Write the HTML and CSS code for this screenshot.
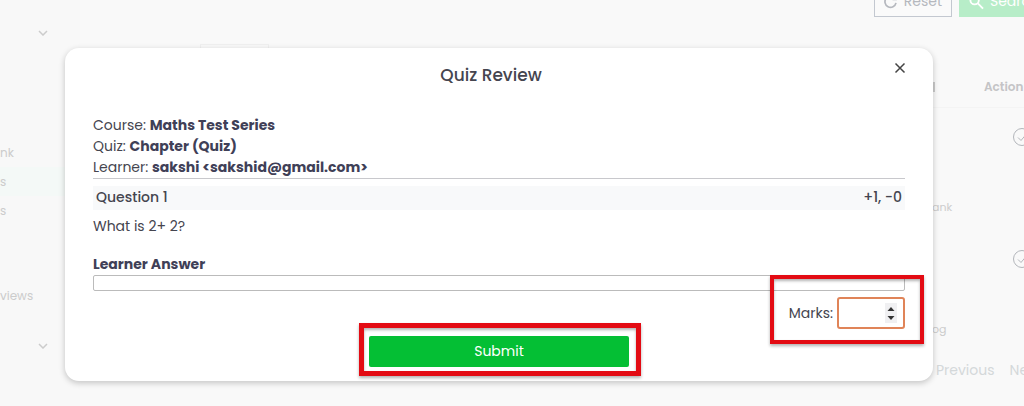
FILE: index.html
```html
<!DOCTYPE html>
<html lang="en">
<head>
<meta charset="utf-8">
<title>Quiz Review</title>
<link rel="stylesheet" href="styles.css">
</head>
<body>
<div class="page">
  <nav class="sidebar">
    <svg class="chevron" viewBox="0 0 10 6"><path d="M1 1l4 4 4-4"/></svg>
    <ul class="menu">
      <li>nk</li>
      <li class="active">s</li>
      <li>s</li>
      <li class="last">views</li>
    </ul>
    <svg class="chevron" viewBox="0 0 10 6"><path d="M1 1l4 4 4-4"/></svg>
  </nav>
  <main class="main">
    <div class="toolbar">
      <button class="tool reset" type="button"><svg class="tool-icon" viewBox="0 0 16 16"><path d="M13 4A6.500 6.500 0 1 0 14 9M14 1v4h-4"/></svg>Reset</button>
      <button class="tool search" type="button"><svg class="tool-icon" viewBox="0 0 16 16"><circle cx="6" cy="6" r="4.500"/><path d="M9.500 9.500L15 15"/></svg>Search</button>
    </div>
    <div class="tab"></div>
    <div class="list">
      <div class="row head"><span class="stem"></span><b class="action">Action</b></div>
      <div class="row"><span class="name">ank</span><svg class="check" viewBox="0 0 20 20"><circle cx="10" cy="10" r="8.500"/><path d="M6 10.500l3 3 5-6"/></svg></div>
      <div class="row"><span class="name">og</span><svg class="check" viewBox="0 0 20 20"><circle cx="10" cy="10" r="8.500"/><path d="M6 10.500l3 3 5-6"/></svg></div>
    </div>
    <div class="pager"><a href="#">Previous</a><a href="#">Next</a></div>
  </main>
</div>
<div class="overlay">
  <form class="modal" role="dialog" aria-labelledby="title">
    <header class="modal-head">
      <h1 id="title">Quiz Review</h1>
      <button class="close" type="button" aria-label="Close"><svg viewBox="0 0 12 12"><path d="M1.500 1.500l9 9M10.500 1.500l-9 9"/></svg></button>
    </header>
    <div class="info">
      <div>Course: <b>Maths Test Series</b></div>
      <div>Quiz: <b>Chapter (Quiz)</b></div>
      <div>Learner: <b>sakshi &lt;sakshid@gmail.com&gt;</b></div>
    </div>
    <div class="question"><span>Question 1</span><span>+1, -0</span></div>
    <p class="prompt">What is 2+ 2?</p>
    <h2>Learner Answer</h2>
    <div class="answer"></div>
    <div class="marks highlight">
      <label for="marks">Marks:</label>
      <span class="number">
        <input id="marks" type="number">
        <svg class="spinner" viewBox="0 0 12 20"><path d="M2.500 8h7L6 4zM2.500 13h7L6 17z"/></svg>
      </span>
    </div>
    <div class="submit-wrap highlight"><button class="submit" type="submit">Submit</button></div>
  </form>
</div>
</body>
</html>
```
FILE: styles.css
```css
* { box-sizing: border-box; }
body {
  margin: 0;
  min-height: 100vh;
  position: relative;
  overflow: hidden;
  background: #f9f9f9;
  color: #45454f;
  font: 14px/21px Poppins, Inter, sans-serif;
}
button, input { font: inherit; }
svg { display: block; fill: none; stroke: currentColor; }
.page { display: flex; min-height: 100vh; color: #ccc; }
.sidebar { width: 80px; padding-top: 30px; background: #f8f8f8; font-size: 12px; }
.chevron { width: 10px; height: 6px; margin-left: 38px; stroke-width: 1.5; }
.menu { list-style: none; margin: 102px 0 33px; padding: 0; }
.menu li { height: 29px; line-height: 29px; }
.menu .active { background: #f4f9f7; }
.menu .last { margin-top: 56px; }
.main { flex: 1; min-width: 0; overflow: hidden; }
.toolbar {
  display: flex;
  align-items: flex-end;
  gap: 7px;
  width: 150px;
  height: 17px;
  margin-left: auto;
  overflow: hidden;
}
.tool {
  display: flex;
  flex: none;
  align-items: center;
  gap: 6px;
  height: 31px;
  padding: 0 9px;
  border: 1px solid #c3c8d0;
  background: #fafafa;
  color: #b5b8be;
}
.tool-icon { width: 16px; height: 16px; stroke-width: 2; }
.reset { width: 78px; }
.search { width: 90px; border-color: #b7edc8; background: #b7edc8; color: #fff; }
.tab { width: 69px; height: 20px; margin: 27px 0 0 120px; border: 1px solid #f0f0f0; }
.list { width: 92px; margin: -18px 0 0 auto; }
.row { display: flex; justify-content: space-between; height: 122px; overflow: hidden; }
.head { height: 62px; padding-top: 30px; border-bottom: 1px solid #f4f4f4; }
.stem { width: 3px; height: 10px; margin-top: 6px; border-right: 2px solid #ccc; }
.action { width: 40px; color: #c4c4c6; font-size: 12px; font-weight: 600; }
.name { align-self: flex-end; padding-bottom: 12px; font-size: 11px; }
.check { width: 20px; height: 20px; flex: none; margin: 19px -8px 0 0; color: #b3b6bb; }
.pager { display: flex; gap: 15px; width: 88px; margin: 8px 0 0 auto; overflow: hidden; }
.pager a { color: #d4d8da; text-decoration: none; }

.overlay { position: absolute; inset: 0; padding: 48px 91px 25px 65px; }
.modal {
  padding: 0 28px 14px;
  border-radius: 14px;
  background: #fff;
  box-shadow: 0 2px 6px rgba(0, 0, 0, .22);
}
.modal-head { display: flex; align-items: center; height: 54px; }
.modal-head h1 { flex: 1; margin: 0; text-align: center; font-size: 17px; font-weight: 500; }
.close { width: 16px; height: 16px; margin-bottom: 14px; padding: 0 0 0 5px; border: 0; background: none; color: #444; }
.close svg { width: 12px; height: 12px; stroke-width: 1.5; }
.info { padding-top: 13px; border-bottom: 1px solid #c8c8cc; }
.info b, h2 { color: #3f4057; font-weight: 700; }
.question {
  display: flex;
  justify-content: space-between;
  margin-top: 7px;
  padding: 1px 3px 2px;
  background: #f8f9fa;
  font-weight: 500;
}
.prompt { margin: 6px 0 16px; }
h2 { margin: 0; font-size: 14px; line-height: 22px; }
.answer { height: 16px; border: 1px solid #bbb; border-radius: 2px; }
.highlight { position: relative; }
.highlight::after {
  content: "";
  position: absolute;
  border: 4px solid #e30b13;
  box-shadow: 0 2px 3px rgba(0, 0, 0, .3), inset 0 2px 3px rgba(0, 0, 0, .3);
  pointer-events: none;
}
.marks {
  display: flex;
  align-items: center;
  justify-content: flex-end;
  gap: 4px;
  width: 115px;
  margin: 6px 0 0 auto;
}
.marks::after { inset: -22px -19px -15px -20px; }
.number { position: relative; }
.number input {
  display: block;
  width: 68px;
  height: 32px;
  padding: 0 22px 0 6px;
  border: 2px solid #e08458;
  border-radius: 3px;
  outline: 0;
  background: #fff;
  appearance: textfield;
}
.spinner { position: absolute; top: 6px; right: 8px; width: 12px; height: 20px; background: #f0f0f2; fill: #333; stroke: none; }
.submit-wrap { width: 32%; margin: 7px auto 0; }
.submit-wrap::after { inset: -13px -12px -9px -10px; border-width: 5px; }
.submit { display: block; width: 100%; height: 31px; border: 0; border-radius: 2px; background: #04bf34; color: #fff; }
```
